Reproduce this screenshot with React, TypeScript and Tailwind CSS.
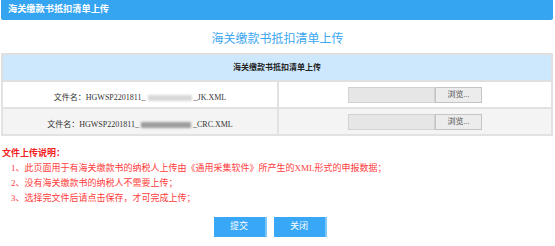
import React from 'react';

const FONT = "font-['Liberation_Serif','Noto_Sans_CJK_SC',serif]";

const FileRow: React.FC<{ prefix: string; suffix: string; blurClass: string; blurWidth: string; shade: boolean }> = ({ prefix, suffix, blurClass, blurWidth, shade }) => (
    <tr className={shade ? 'bg-[#f4f4f4]' : 'bg-white'}>
        <td className="h-[27px] border-2 border-[#e2e2e2] text-center align-middle">
            <span className="inline-flex items-center text-[8px] leading-none text-[#333]">
                <span>文件名：{prefix}</span>
                <span className={`inline-block h-[6px] ${blurWidth} ${blurClass} blur-[1.2px]`} />
                <span>{suffix}</span>
            </span>
        </td>
        <td className="border-2 border-[#e2e2e2] align-middle">
            <div className="flex justify-center">
                <div className="h-[16px] w-[87px] border border-[#d2d2d2] bg-[#e6e6e6]" />
                <button className="h-[16px] w-[47px] border border-[#c4c4c4] bg-[#ececec] text-[8px] leading-none text-[#555]">
                    浏览...
                </button>
            </div>
        </td>
    </tr>
);

export default function App() {
    return (
        <div className={`w-[555px] h-[246px] overflow-hidden bg-white ${FONT}`}>
            {/* title bar */}
            <div className="mx-[1px] h-[20px] w-[552px] rounded-b-[2px] bg-[#35a5f2] pl-[7px] flex items-center">
                <span className="text-[9.2px] font-bold leading-none text-white">海关缴款书抵扣清单上传</span>
            </div>

            <div className="pt-[12px] pb-[7px] text-center text-[12px] leading-[14px] text-[#3ba6ef]">
                海关缴款书抵扣清单上传
            </div>

            <table className="ml-[1px] w-[552px] table-fixed border-collapse">
                <colgroup>
                    <col className="w-[276px]" />
                    <col />
                </colgroup>
                <tbody>
                    <tr className="bg-[#cde7fc]">
                        <td colSpan={2} className="h-[27px] border-2 border-[#e0e0e0] text-center align-middle text-[8px] font-bold leading-none text-[#222]">
                            海关缴款书抵扣清单上传
                        </td>
                    </tr>
                    <FileRow prefix="HGWSP2201811_" suffix="_JK.XML" blurClass="bg-[#d8d8d8]" blurWidth="w-[44px] mx-[2px]" shade={false} />
                    <FileRow prefix="HGWSP2201811_" suffix="_CRC.XML" blurClass="bg-[#9e9e9e]" blurWidth="w-[50px] mx-[2px]" shade={true} />
                </tbody>
            </table>

            <div className="mt-[10px] pl-[2px] text-[9px] leading-[15px]">
                <div className="font-bold text-[#f02020]">文件上传说明：</div>
                <div className="pl-[9px] text-[#ff3b3b]">
                    <div>1、此页面用于有海关缴款书的纳税人上传由《通用采集软件》所产生的XML形式的申报数据；</div>
                    <div>2、没有海关缴款书的纳税人不需要上传；</div>
                    <div>3、选择完文件后请点击保存，才可完成上传；</div>
                </div>
            </div>

            <div className="mt-[11px] flex justify-center gap-[7px] pr-[15px]">
                <button className="h-[20px] w-[53px] border-r-2 border-[#7cc6f9] bg-[#38a8f6] text-[9px] text-white">提交</button>
                <button className="h-[20px] w-[53px] border-r-2 border-[#7cc6f9] bg-[#38a8f6] text-[9px] text-white">关闭</button>
            </div>
        </div>
    );
}
